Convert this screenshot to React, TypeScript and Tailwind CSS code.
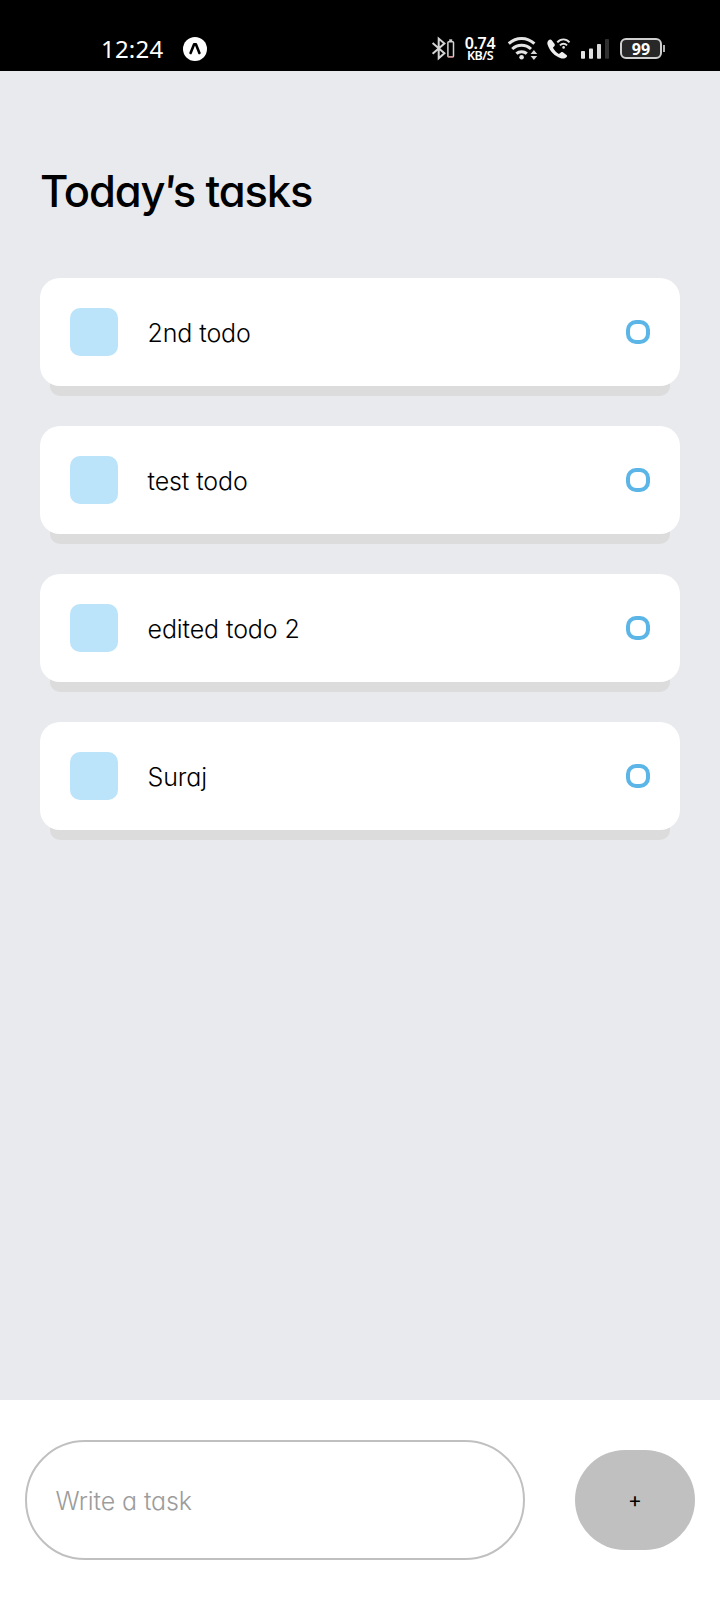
const tasks = ["2nd todo", "test todo", "edited todo 2", "Suraj"];

const uiFont =
  "font-['Inter',sans-serif] [font-feature-settings:'cv11','calt'_0]";

function StatusIcons() {
  return (
    <div className="flex">
      <svg className="block" width="34" height="30" viewBox="430 34 34 30" fill="none">
        <g stroke="#d4d4d4" strokeWidth="2">
          <path d="M432.6 43 L444.4 53.3 L438.7 58.2 V38.6 L444.4 43.4 L432.6 53.8" />
          <rect x="447.9" y="41.8" width="5.6" height="15" rx="0.8" strokeWidth="1.5" />
          <path d="M449.2 40.2 H452.2" strokeWidth="1.8" />
          <path d="M448.2 56.8 H453.2" stroke="#c98b8b" strokeWidth="1.4" />
        </g>
      </svg>
      <div className="flex w-[33px] flex-col items-center font-['Noto_Sans',sans-serif] font-semibold text-white">
        <span className="-ml-[1px] mt-[3px] text-[16px] leading-[13px] tracking-[-0.3px]">0.74</span>
        <span className="-ml-[1px] text-[12.5px] leading-[12px] tracking-[-0.5px]">KB/S</span>
      </div>
      <svg className="block" width="121" height="30" viewBox="497 34 121 30" fill="none">
        <g stroke="#e4e4e4" strokeWidth="3">
          <path d="M508.8 43.6 C516.2 36.7 527 36.7 534.4 43.6" />
          <path d="M512.2 49 C517.6 44 525.6 44 531 49" />
          <path d="M516.4 53.6 C519.2 51 524 51 526.8 53.6" />
        </g>
        <circle cx="521.6" cy="57.3" r="2.3" fill="#e4e4e4" />
        <path d="M530.6 54 L533.9 50 L537.2 54 Z M530.6 56 L533.9 60 L537.2 56 Z" fill="#d8d8d8" />
        <path
          d="M548.6 40.2 C547.4 41.4 547 43 547.7 45 C549.9 51.4 554.6 56.2 561.5 58.4 C563.4 59 565.2 58.3 566.6 57 C567.3 56.3 567.2 55.5 566.5 54.9 L562.9 52.3 C562.2 51.8 561.5 51.9 560.9 52.4 L558.9 54 C556.2 52.5 554.3 50.4 552.9 47.8 L554.5 46 C555 45.4 555 44.7 554.6 44 L551.8 40.2 C551 39.2 549.6 39.2 548.6 40.2 Z"
          fill="#efefef"
        />
        <g stroke="#e4e4e4" strokeWidth="1.9">
          <path d="M557.3 42.4 C560.8 38.4 566 38.4 569.5 42.4" />
          <path d="M560 45.4 C562 43.2 565 43.2 567 45.4" />
        </g>
        <circle cx="563.6" cy="47.4" r="1.3" fill="#e4e4e4" />
        <rect x="581" y="51" width="4" height="7.7" rx="0.8" fill="#e4e4e4" />
        <rect x="589" y="48.6" width="4" height="10.1" rx="0.8" fill="#e0e0e0" />
        <rect x="597" y="44" width="4" height="14.7" rx="0.8" fill="#d8d8d8" />
        <rect x="605" y="39" width="4" height="19.7" rx="0.8" fill="#303030" />
      </svg>
      <div className="ml-[2px] mt-[4px] flex h-[21px] w-[42px] items-center justify-center rounded-[6px] border-2 border-[#cfcfcf] bg-[#282828] pt-px font-['Noto_Sans',sans-serif] text-[16px] font-bold leading-[17px] text-white">
        99
      </div>
      <div className="ml-px mt-[11px] h-[7px] w-[1.5px] bg-[#b0b0b0]" />
    </div>
  );
}

function StatusBar() {
  return (
    <header className="flex h-[71px] shrink-0 items-start bg-black pl-[101px] text-white">
      <div className="mt-[32px] w-[82px] whitespace-nowrap font-['Noto_Sans',sans-serif] text-[24px] leading-[33px] tracking-[0.2px]">
        12:24
      </div>
      <svg className="mt-[37px] block" width="24" height="24" viewBox="0 0 24 24">
        <circle cx="12" cy="12" r="12" fill="#fff" />
        <path d="M7.6 16 L11 7.4 H13 L16.4 16" fill="none" stroke="#000" strokeWidth="2.6" strokeLinejoin="round" strokeLinecap="round" />
      </svg>
      <div className="ml-[223px] mt-[34px]">
        <StatusIcons />
      </div>
    </header>
  );
}

function Task({ text }: { text: string }) {
  return (
    <li className="flex flex-col items-center">
      <div className="z-10 flex h-[108px] w-full items-center rounded-[20px] bg-white px-[30px]">
        <div className="size-12 rounded-[10px] bg-[#bbe3fa]" />
        <span className="ml-[29.5px] mt-[2px] flex-1 text-[25px] font-[350] leading-[34px] tracking-[-0.1px] text-black">
          {text}
        </span>
        <div className="size-6 rounded-[10px] border-4 border-[#5bb5e6]" />
      </div>
      <div className="-mt-[20px] h-[30px] w-[620px] rounded-b-[10px] bg-[#dcdcdc]" />
    </li>
  );
}

export default function App() {
  return (
    <div className={`flex h-[1600px] w-[720px] flex-col overflow-hidden bg-[#e8eaed] ${uiFont}`}>
      <StatusBar />
      <main className="flex-1 px-10 pt-[91px]">
        <h1 className="h-[58px] whitespace-nowrap text-[43.5px] font-medium leading-[58px] tracking-[-1.15px] text-black">
          Today<span className="-ml-[1px] -mr-[3px] inline-block -skew-x-6">'</span>s tasks
        </h1>
        <ul className="mt-[58px] flex flex-col gap-[30px]">
          {tasks.map((task) => (
            <Task key={task} text={task} />
          ))}
        </ul>
      </main>
      <footer className="flex h-[200px] shrink-0 items-center justify-between bg-white px-[25px]">
        <input
          className="h-[120px] w-[500px] rounded-[60px] border-2 border-[#c0c0c0] bg-white px-[28.5px] pt-[2px] text-[25px] font-[330] tracking-[-0.1px] outline-none placeholder:text-[#9c9c9c]"
          placeholder="Write a task"
        />
        <button className="flex h-[100px] w-[120px] items-center justify-center rounded-[60px] bg-[#c0c0c0]" aria-label="Add task">
          <span className="text-[21px] leading-[24px] text-black">+</span>
        </button>
      </footer>
    </div>
  );
}
